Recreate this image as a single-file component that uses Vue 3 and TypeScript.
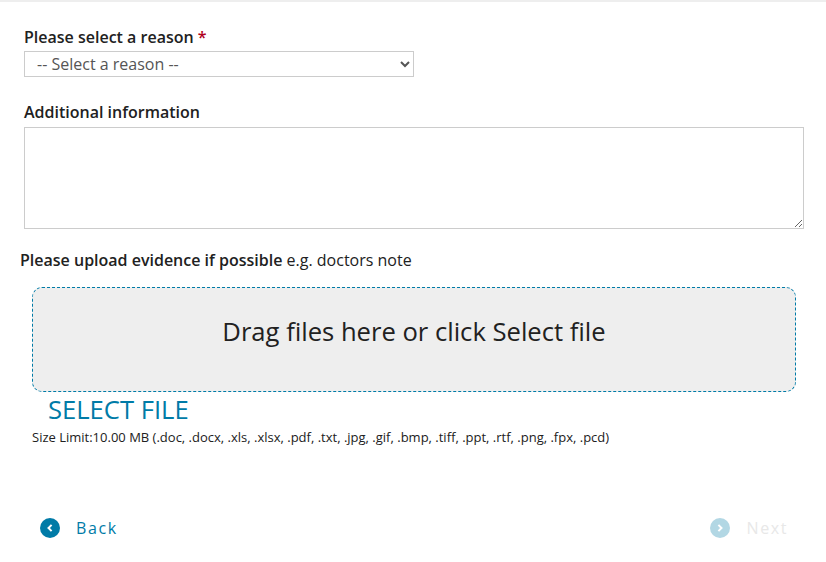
<script setup lang="ts">
</script>

<template>
  <div class="page">
    <div class="topline"></div>
    <label class="lbl first">Please select a reason <span class="req">*</span></label>
    <select class="sel"><option>-- Select a reason --</option></select>
    <label class="lbl second">Additional information</label>
    <textarea class="ta"></textarea>
    <p class="evidence"><b>Please upload evidence if possible</b> e.g. doctors note</p>
    <div class="drop">Drag files here or click Select file</div>
    <div class="selectfile">SELECT FILE</div>
    <div class="limit">Size Limit:10.00 MB (.doc, .docx, .xls, .xlsx, .pdf, .txt, .jpg, .gif, .bmp, .tiff, .ppt, .rtf, .png, .fpx, .pcd)</div>
    <div class="nav">
      <div class="btn">
        <span class="circle"><svg width="10" height="10" viewBox="0 0 10 10"><path d="M6.6 1.9 3.5 5l3.1 3.1" fill="none" stroke="#fff" stroke-width="2"/></svg></span>
        <span>Back</span>
      </div>
      <div class="btn off">
        <span class="circle"><svg width="10" height="10" viewBox="0 0 10 10"><path d="M3.4 1.9 6.5 5 3.4 8.1" fill="none" stroke="#fff" stroke-width="2"/></svg></span>
        <span>Next</span>
      </div>
    </div>
  </div>
</template>

<style>
html, body { margin: 0; background: #fff; }
</style>

<style scoped>
.page { width: 826px; height: 562px; box-sizing: border-box; font-family: "Open Sans", sans-serif; color: #212121; position: relative; overflow: hidden; display: flex; flex-direction: column; align-items: flex-start; }
.topline { width: 100%; height: 2px; background: #eee; flex: none; }
.lbl { font-weight: 600; font-size: 16px; line-height: 22px; margin-left: 24px; }
.first { margin-top: 24px; }
.req { color: #b00020; }
.sel { width: 390px; height: 26px; margin: 3px 0 0 24px; font: 16px "Open Sans", sans-serif; color: #555; padding: 0 8px; background: #fff; border: 1px solid #ccc; border-radius: 0; }
.second { margin-top: 24px; }
.ta { width: 780px; height: 102px; box-sizing: border-box; margin: 4px 0 0 24px; border: 1px solid #ccc; display: block; }
.evidence { margin: 20px 0 0 20px; font-size: 16px; line-height: 22px; }
.evidence b { font-weight: 600; }
.drop { width: 764px; height: 105px; margin: 16px 0 0 32px; padding-bottom: 16px; box-sizing: border-box; background: #eee; border: 1px dashed #007ba7; border-radius: 10px; display: flex; align-items: center; justify-content: center; font-size: 25.6px; }
.selectfile { margin: 1px 0 0 48px; font-size: 25.6px; line-height: 34px; color: #007ba7; }
.limit { margin: 1px 0 0 32px; font-size: 13px; line-height: 18px; }
.nav { width: 100%; box-sizing: border-box; padding: 0 38px 0 40px; margin-top: 72px; display: flex; justify-content: space-between; }
.btn { display: flex; align-items: center; gap: 16px; font-size: 16px; letter-spacing: 1.6px; color: #007ba7; line-height: 20px; }
.circle { width: 20px; height: 20px; border-radius: 50%; background: #007ba7; display: flex; align-items: center; justify-content: center; }
.off { color: #e8e8e8; }
.off .circle { background: #b2d7e4; }
</style>
